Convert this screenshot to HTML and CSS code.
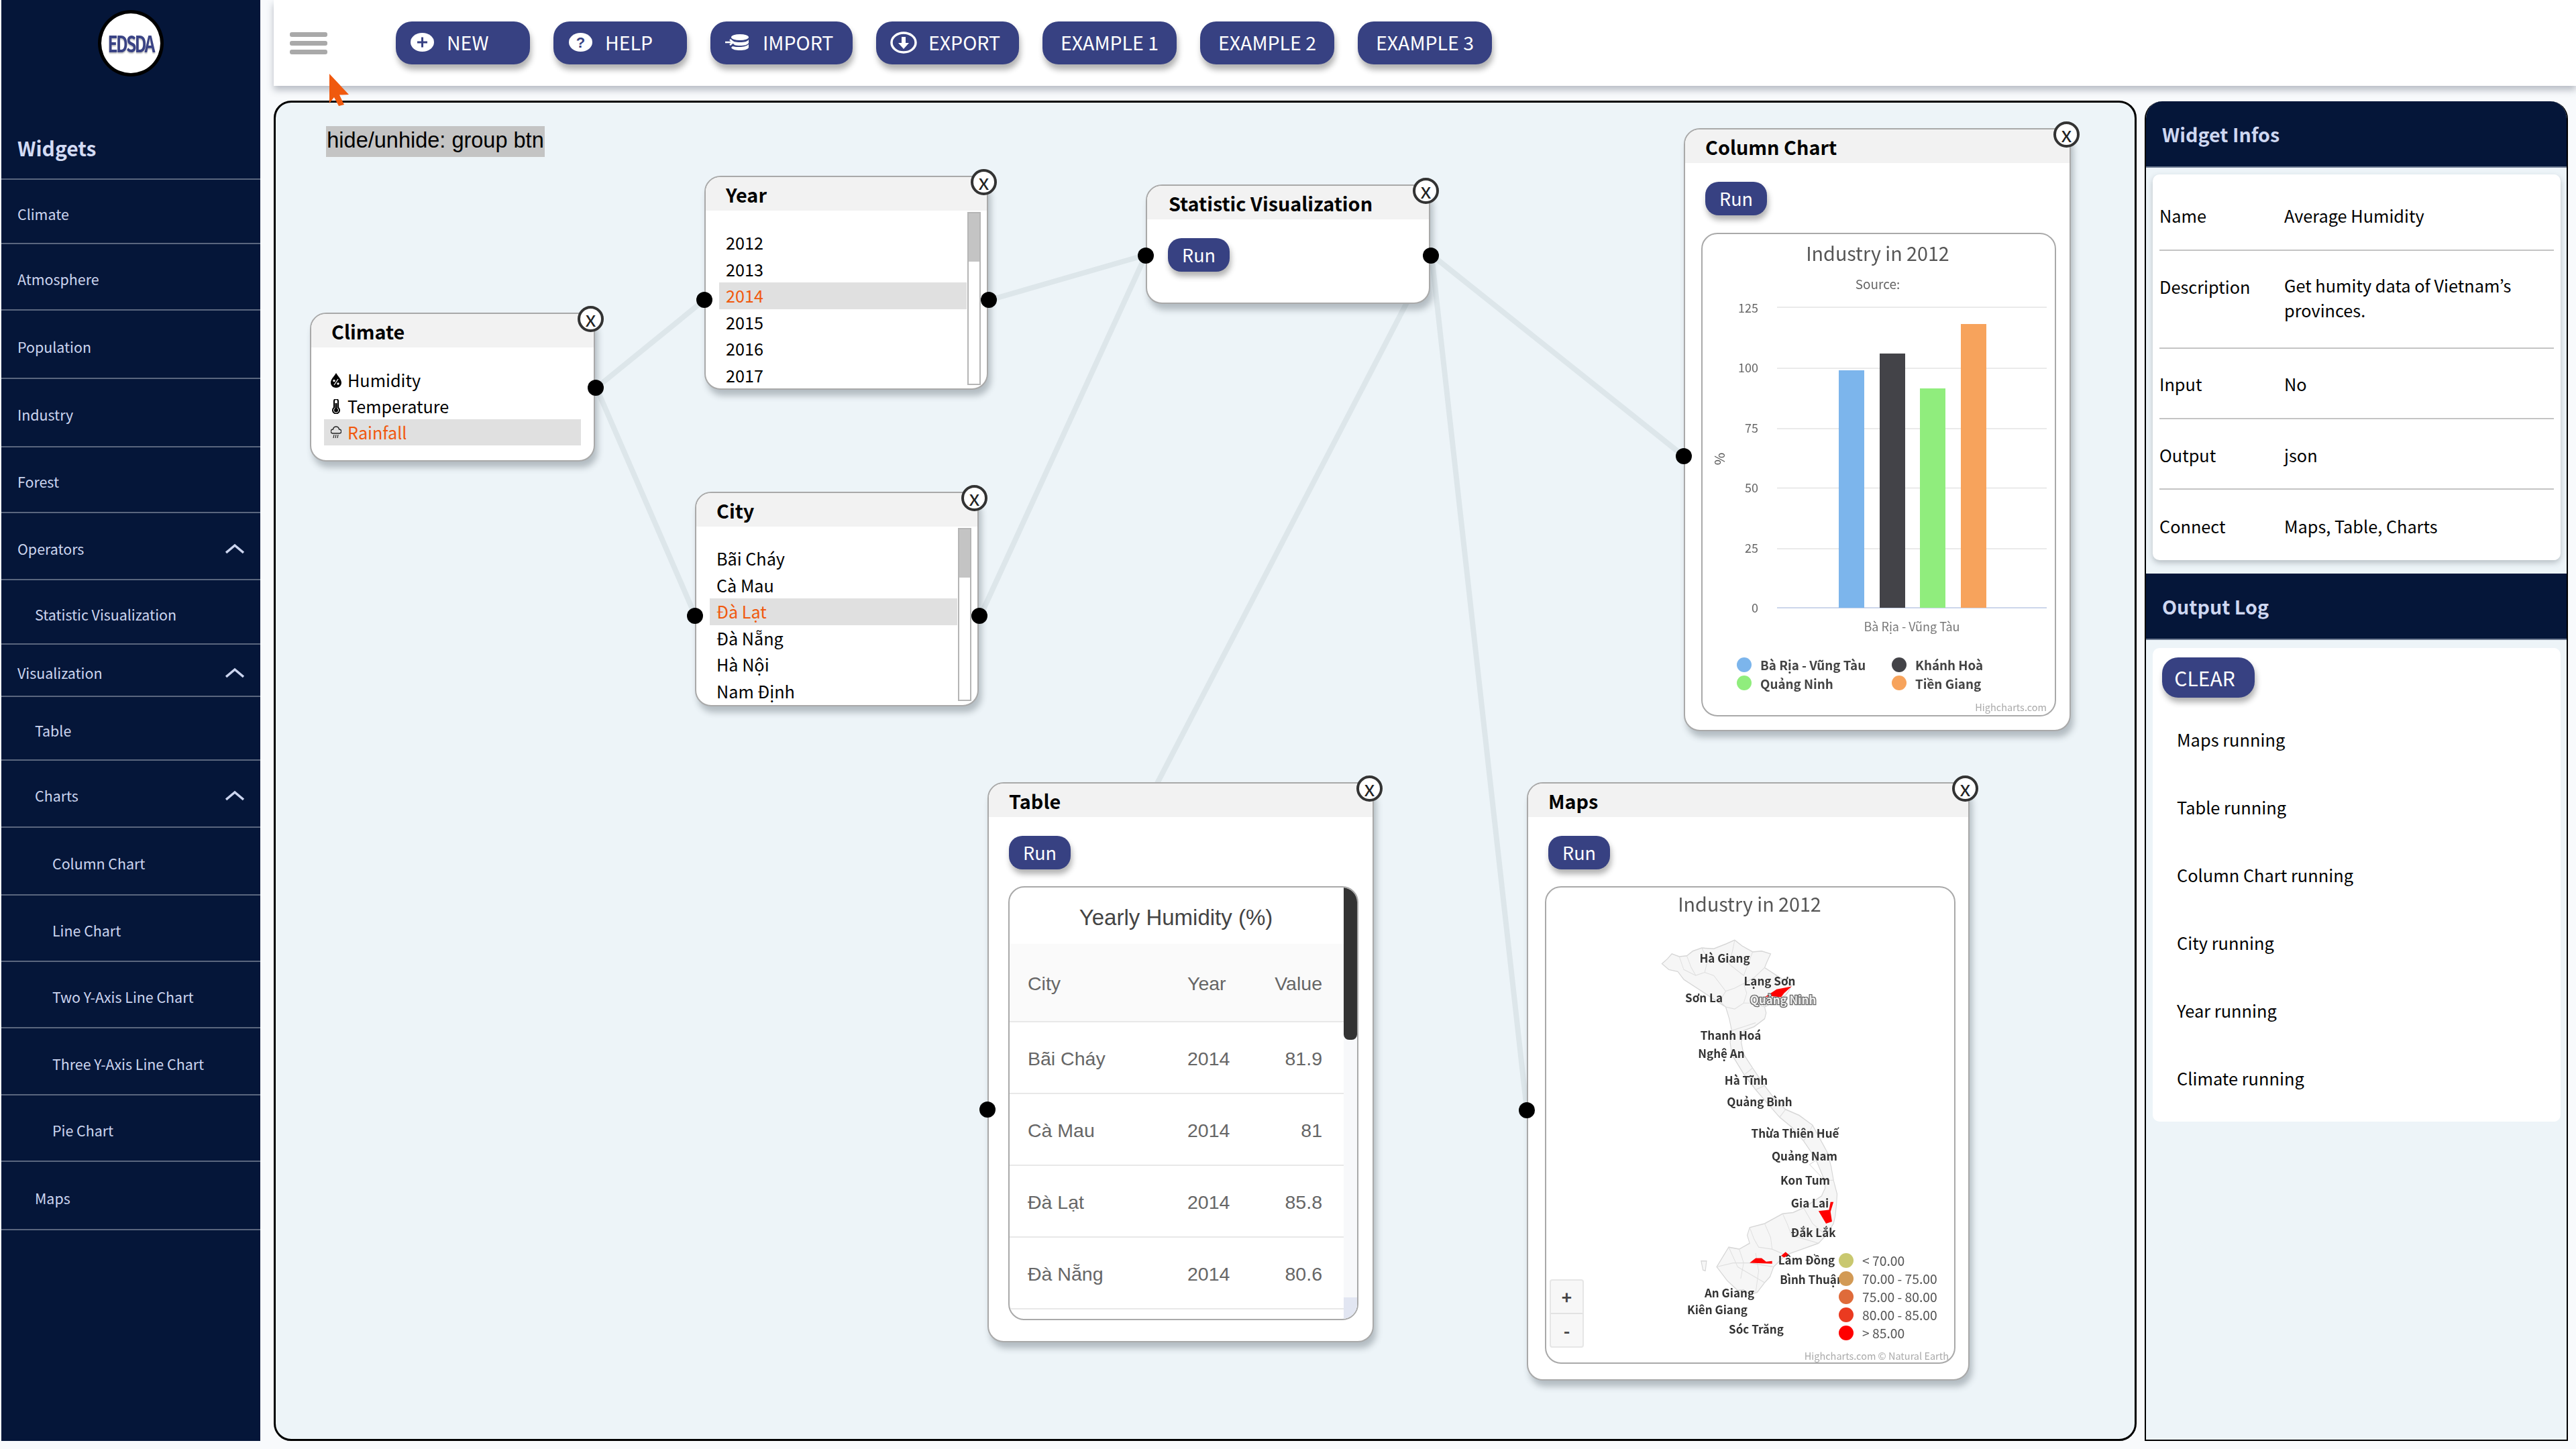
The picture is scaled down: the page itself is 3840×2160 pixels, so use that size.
FILE: index.html
```html
<!DOCTYPE html>
<html lang="en">
<head>
<meta charset="utf-8">
<title>EDSDA</title>
<link rel="stylesheet" href="styles.css">
</head>
<body>
<div class="app">
  <aside class="sidebar">
    <div class="logo-wrap"><div class="logo"><span class="logo-text">EDSDA</span></div></div>
    <div class="side-title">Widgets</div>
    <nav class="side-nav">
      <div class="nav-row">Climate</div>
      <div class="nav-row">Atmosphere</div>
      <div class="nav-row">Population</div>
      <div class="nav-row">Industry</div>
      <div class="nav-row">Forest</div>
      <div class="nav-row">Operators<svg class="chev" viewBox="0 0 28 16"><path d="M1 14 L14 3 L27 14"/></svg></div>
      <div class="nav-row sub">Statistic Visualization</div>
      <div class="nav-row">Visualization<svg class="chev" viewBox="0 0 28 16"><path d="M1 14 L14 3 L27 14"/></svg></div>
      <div class="nav-row sub">Table</div>
      <div class="nav-row sub">Charts<svg class="chev" viewBox="0 0 28 16"><path d="M1 14 L14 3 L27 14"/></svg></div>
      <div class="nav-row subsub">Column Chart</div>
      <div class="nav-row subsub">Line Chart</div>
      <div class="nav-row subsub">Two Y-Axis Line Chart</div>
      <div class="nav-row subsub">Three Y-Axis Line Chart</div>
      <div class="nav-row subsub">Pie Chart</div>
      <div class="nav-row sub">Maps</div>
    </nav>
  </aside>

  <main class="main">
    <header class="topbar">
      <div class="burger"><i></i><i></i><i></i></div>
      <div class="btn-group">
        <button class="tbtn b-new"><svg class="ic-oval" viewBox="0 0 35 28"><ellipse cx="17.5" cy="14" rx="17.5" ry="14" fill="#fff"/><path d="M17.5 6.5v15M10 14h15" stroke="#374182" stroke-width="3" fill="none"/></svg>NEW</button>
        <button class="tbtn b-help"><svg class="ic-oval" viewBox="0 0 35 28"><ellipse cx="17.5" cy="14" rx="17.5" ry="14" fill="#fff"/><text x="17.5" y="21.5" text-anchor="middle" class="q-mark">?</text></svg>HELP</button>
        <button class="tbtn b-import"><svg class="ic-db" viewBox="0 0 36 24"><ellipse cx="22" cy="4.5" rx="13" ry="4.5" fill="#fff"/><path d="M9 8c2 3 6 4 13 4s11-1 13-4v5c-2 3-6 4-13 4-3 0-6-.3-8-1l-3-3H9z" fill="#fff"/><path d="M11 18c3 1 7 1 11 1s10-1 13-4v5c-2 3-7 4-13 4s-11-1-13-4z" fill="#fff"/><path d="M0 12h11M7 8l5 4-5 4" stroke="#fff" stroke-width="2.4" fill="none"/></svg>IMPORT</button>
        <button class="tbtn b-export"><svg class="ic-exp" viewBox="0 0 40 33"><ellipse cx="20" cy="16.5" rx="18" ry="14.5" fill="none" stroke="#fff" stroke-width="3.5"/><path d="M17 8h6v9h5l-8 9-8-9h5z" fill="#fff"/></svg>EXPORT</button>
        <button class="tbtn b-ex">EXAMPLE 1</button>
        <button class="tbtn b-ex">EXAMPLE 2</button>
        <button class="tbtn b-ex">EXAMPLE 3</button>
      </div>
    </header>

    <div class="workspace">
      <section class="canvas">
        <svg class="links" viewBox="411 153 2771 1992">
          <line x1="889" y1="578" x2="1050" y2="447"/>
          <line x1="889" y1="578" x2="1036" y2="917"/>
          <line x1="1476" y1="447" x2="1708" y2="380"/>
          <line x1="1462" y1="917" x2="1708" y2="380"/>
          <line x1="2134" y1="380" x2="2510" y2="680"/>
          <line x1="2134" y1="380" x2="2276" y2="1655"/>
          <line x1="2134" y1="380" x2="1472" y2="1655"/>
        </svg>

        <div class="hint">hide/unhide: group btn</div>

        <article class="widget w-climate">
          <h3 class="w-head">Climate</h3>
          <span class="close">x</span><span class="dot out"></span>
          <ul class="climate-list">
            <li><svg class="wi" viewBox="0 0 16 22"><path d="M8 0C6 4 0 9 0 14.5 0 19 3.5 22 8 22s8-3 8-7.5C16 9 10 4 8 0z"/><path d="M5 18l6-9" stroke="#fff" stroke-width="1.300"/><circle cx="5" cy="11.500" r="1.700" fill="#fff"/><circle cx="11" cy="16" r="1.700" fill="#fff"/></svg>Humidity</li>
            <li><svg class="wi" viewBox="0 0 16 22"><path d="M5 3a3 3 0 0 1 6 0v9.500a5 5 0 1 1-6 0z" fill="#fff" stroke="#000" stroke-width="2"/><path d="M8 6v9" stroke="#000" stroke-width="3"/><circle cx="8" cy="16.500" r="3"/></svg>Temperature</li>
            <li class="sel"><svg class="wi" viewBox="0 0 16 22"><path d="M3 12a3 3 0 0 1 .5-6C4 3 6 2 8 2s4 1 4.500 4a3 3 0 0 1 .5 6z" fill="none" stroke="#222" stroke-width="1.400"/><path d="M5 14l-1 5M8 14l-1 5M11 14l-1 5" stroke="#222" stroke-width="1.200"/></svg>Rainfall</li>
          </ul>
        </article>

        <article class="widget w-year">
          <h3 class="w-head">Year</h3>
          <span class="close">x</span><span class="dot in"></span><span class="dot out"></span>
          <div class="list-wrap">
            <ul class="opt-list">
              <li>2012</li><li>2013</li><li class="sel">2014</li><li>2015</li><li>2016</li><li>2017</li>
            </ul>
            <div class="scroll"><i></i></div>
          </div>
        </article>

        <article class="widget w-city">
          <h3 class="w-head">City</h3>
          <span class="close">x</span><span class="dot in"></span><span class="dot out"></span>
          <div class="list-wrap">
            <ul class="opt-list">
              <li>Bãi Cháy</li><li>Cà Mau</li><li class="sel">Đà Lạt</li><li>Đà Nẵng</li><li>Hà Nội</li><li>Nam Định</li>
            </ul>
            <div class="scroll"><i></i></div>
          </div>
        </article>

        <article class="widget w-stat">
          <h3 class="w-head">Statistic Visualization</h3>
          <span class="close">x</span><span class="dot in"></span><span class="dot out"></span>
          <button class="run">Run</button>
        </article>

        <article class="widget w-column">
          <h3 class="w-head">Column Chart</h3>
          <span class="close">x</span><span class="dot in"></span>
          <button class="run">Run</button>
          <div class="chart-box">
            <svg class="chart" viewBox="2538 349 525 717">
              <text x="2799" y="389" class="c-title">Industry in 2012</text>
              <text x="2799" y="431" class="c-sub">Source:</text>
              <g class="grid">
                <line x1="2649" x2="3051" y1="458" y2="458"/><line x1="2649" x2="3051" y1="549" y2="549"/>
                <line x1="2649" x2="3051" y1="639" y2="639"/><line x1="2649" x2="3051" y1="727.500" y2="727.500"/>
                <line x1="2649" x2="3051" y1="818" y2="818"/>
              </g>
              <line x1="2649" x2="3051" y1="906" y2="906" class="axis"/>
              <g class="ylab">
                <text x="2621" y="466">125</text><text x="2621" y="555">100</text><text x="2621" y="645">75</text>
                <text x="2621" y="734">50</text><text x="2621" y="824">25</text><text x="2621" y="913">0</text>
              </g>
              <text x="0" y="0" class="ytitle" transform="translate(2571 684) rotate(-90)">%</text>
              <rect x="2741" y="552" width="38" height="354" fill="#7cb5ec"/>
              <rect x="2802" y="527" width="38" height="379" fill="#434348"/>
              <rect x="2862" y="579" width="38" height="327" fill="#90ed7d"/>
              <rect x="2923" y="483" width="38" height="423" fill="#f7a35c"/>
              <text x="2850" y="941" class="xlab">Bà Rịa - Vũng Tàu</text>
              <circle cx="2600" cy="991" r="11" fill="#7cb5ec"/><circle cx="2600" cy="1018" r="11" fill="#90ed7d"/>
              <circle cx="2831" cy="991" r="11" fill="#434348"/><circle cx="2831" cy="1018" r="11" fill="#f7a35c"/>
              <g class="leg">
                <text x="2624" y="999">Bà Rịa - Vũng Tàu</text><text x="2624" y="1027">Quảng Ninh</text>
                <text x="2855" y="999">Khánh Hoà</text><text x="2855" y="1027">Tiền Giang</text>
              </g>
              <text x="3051" y="1060" class="credit">Highcharts.com</text>
            </svg>
          </div>
        </article>

        <article class="widget w-table">
          <h3 class="w-head">Table</h3>
          <span class="close">x</span><span class="dot in"></span>
          <button class="run">Run</button>
          <div class="table-box">
            <div class="table-scroll">
              <div class="t-title">Yearly Humidity (%)</div>
              <table class="data">
                <thead><tr><th>City</th><th>Year</th><th class="num">Value</th></tr></thead>
                <tbody>
                  <tr><td>Bãi Cháy</td><td>2014</td><td class="num">81.9</td></tr>
                  <tr><td>Cà Mau</td><td>2014</td><td class="num">81</td></tr>
                  <tr><td>Đà Lạt</td><td>2014</td><td class="num">85.8</td></tr>
                  <tr><td>Đà Nẵng</td><td>2014</td><td class="num">80.6</td></tr>
                </tbody>
              </table>
            </div>
            <div class="t-bar"><i class="t-thumb"></i><i class="t-end"></i></div>
          </div>
        </article>

        <article class="widget w-maps">
          <h3 class="w-head">Maps</h3>
          <span class="close">x</span><span class="dot in"></span>
          <button class="run">Run</button>
          <div class="map-box">
            <svg class="chart" viewBox="2305 1324 608 708">
              <text x="2608" y="1360" class="c-title">Industry in 2012</text>
              <g transform="translate(2260 1150) scale(.4464 .5869)">
                <polygon class="land" points="487,490 505,478 520,465 545,472 570,470 590,458 620,450 660,452 700,440 730,430 755,445 790,460 820,458 850,465 838,485 830,500 870,520 920,545 910,560 900,570 865,585 830,600 835,615 830,630 795,650 760,660 752,690 760,720 790,755 830,800 865,835 900,860 945,875 990,900 1015,935 1040,970 1052,1005 1060,1040 1072,1075 1070,1100 1066,1130 1060,1150 1035,1180 1010,1200 955,1215 900,1230 880,1245 860,1260 848,1285 830,1300 805,1325 780,1330 760,1318 740,1320 705,1295 670,1260 690,1235 710,1210 745,1215 780,1200 772,1180 780,1160 830,1150 890,1125 925,1122 960,1110 990,1095 1020,1080 1032,1060 1030,1040 1000,985 960,940 920,905 880,880 840,845 800,810 760,770 720,720 715,690 720,660 712,630 700,600 660,580 620,560 590,545 560,530 548,518 540,510 510,505"/>
                <polygon class="land" points="618,1245 636,1245 632,1270 624,1268"/>
                <g class="prov">
                  <polyline points="570,470 585,500 600,520 630,512 660,520 680,540 700,560 730,552 760,540 795,525 830,500"/>
                  <polyline points="730,430 722,460 710,490 735,505 760,520 775,490 790,460"/>
                  <polyline points="620,450 640,480 630,512"/>
                  <polyline points="545,472 560,505 600,520"/>
                  <polyline points="700,560 680,585 700,600"/>
                  <polyline points="700,600 730,605 760,590 795,590 830,600"/>
                  <polyline points="760,540 770,565 760,590"/>
                  <polyline points="720,660 760,650 800,640"/>
                  <polyline points="760,720 740,725 720,720"/>
                  <polyline points="790,755 765,770"/>
                  <polyline points="830,800 800,810"/>
                  <polyline points="900,860 880,880"/>
                  <polyline points="990,900 975,925 960,940"/>
                  <polyline points="1040,970 1010,985 980,1000 1005,1020 1030,1040"/>
                  <polyline points="1060,1040 1030,1040"/>
                  <polyline points="890,1125 905,1150 920,1180 965,1190 1010,1200"/>
                  <polyline points="960,1110 990,1150 1035,1180"/>
                  <polyline points="780,1160 795,1190 810,1210 855,1215 900,1230"/>
                  <polyline points="830,1150 850,1185 855,1215"/>
                  <polyline points="710,1210 725,1235 740,1260 785,1280 830,1300"/>
                  <polyline points="670,1260 725,1250 780,1250 820,1255 860,1260"/>
                  <polyline points="745,1215 760,1250 750,1290"/>
                  <polyline points="800,1225 810,1270 800,1325"/>
                </g>
                <polygon class="red" points="830,575 870,555 920,548 895,565 885,575 850,572"/>
                <polygon class="red" points="1010,1118 1045,1115 1050,1095 1060,1095 1050,1120 1055,1145 1035,1150"/>
                <polygon class="red" points="780,1250 800,1238 820,1238 835,1247 855,1245 855,1252"/>
                <polygon class="red" points="885,1232 900,1222 912,1230 895,1236"/>
              </g>
              <g class="mlab">
                <text x="2571" y="1436">Hà Giang</text><text x="2638" y="1470">Lạng Sơn</text>
                <text x="2540" y="1495">Sơn La</text><text x="2658" y="1498" class="halo">Quảng Ninh</text>
                <text x="2580" y="1551">Thanh Hoá</text><text x="2566" y="1578">Nghệ An</text>
                <text x="2603" y="1618">Hà Tĩnh</text><text x="2623" y="1650">Quảng Bình</text>
                <text x="2676" y="1697">Thừa Thiên Huế</text><text x="2690" y="1731">Quảng Nam</text>
                <text x="2691" y="1767">Kon Tum</text><text x="2698" y="1801">Gia Lai</text>
                <text x="2703" y="1845">Đắk Lắk</text><text x="2693" y="1886">Lâm Đồng</text>
                <text x="2701" y="1915">Bình Thuận</text><text x="2578" y="1935">An Giang</text>
                <text x="2560" y="1960">Kiên Giang</text><text x="2618" y="1989">Sóc Trăng</text>
              </g>
              <circle cx="2752" cy="1880" r="11" fill="#c9c86f"/><circle cx="2752" cy="1907" r="11" fill="#d29a55"/>
              <circle cx="2752" cy="1934" r="11" fill="#df6b3a"/><circle cx="2752" cy="1961" r="11" fill="#ea3a20"/>
              <circle cx="2752" cy="1988" r="11" fill="#ff0000"/>
              <g class="mleg">
                <text x="2776" y="1888">&lt; 70.00</text><text x="2776" y="1915">70.00 - 75.00</text>
                <text x="2776" y="1942">75.00 - 80.00</text><text x="2776" y="1969">80.00 - 85.00</text>
                <text x="2776" y="1996">&gt; 85.00</text>
              </g>
              <text x="2905" y="2028" class="credit">Highcharts.com © Natural Earth</text>
            </svg>
            <div class="zoom-ctl"><span>+</span><span>-</span></div>
          </div>
        </article>
      </section>

      <aside class="panel">
        <h2 class="p-head">Widget Infos</h2>
        <div class="info-card">
          <div class="info-row r1"><span class="k">Name</span><span class="v">Average Humidity</span></div>
          <div class="info-row r2"><span class="k">Description</span><span class="v">Get humity data of Vietnam’s provinces.</span></div>
          <div class="info-row"><span class="k">Input</span><span class="v">No</span></div>
          <div class="info-row"><span class="k">Output</span><span class="v">json</span></div>
          <div class="info-row"><span class="k">Connect</span><span class="v">Maps, Table, Charts</span></div>
        </div>
        <h2 class="p-head log-head">Output Log</h2>
        <div class="log-card">
          <button class="clear">CLEAR</button>
          <ul class="log">
            <li>Maps running</li><li>Table running</li><li>Column Chart running</li>
            <li>City running</li><li>Year running</li><li>Climate running</li>
          </ul>
        </div>
      </aside>
    </div>
  </main>
</div>
<svg class="cursor" viewBox="0 0 30 48"><polygon points="1,0 30,31 16,31.500 23,46 15,48 8,35 1,44"/></svg>
</body>
</html>
```

FILE: styles.css
```css
* { box-sizing: border-box; }
html, body { margin: 0; padding: 0; }
body {
  width: 3840px;
  height: 2160px;
  overflow: hidden;
  position: relative;
  background: #f8fafc;
  font-family: "Noto Sans CJK JP", "Noto Sans", sans-serif;
  color: #000;
}
ul { list-style: none; margin: 0; padding: 0; }
h2, h3 { margin: 0; }
button { font-family: inherit; border: 0; cursor: pointer; }

.app { display: flex; height: 2148px; }

/* Sidebar */
.sidebar {
  flex: 0 0 388px;
  background: #051639;
  border-left: 2px solid #f2f5f8;
  color: #ccd5ef;
}
.logo-wrap { height: 174px; padding-top: 15px; display: flex; justify-content: center; }
.logo {
  width: 98px;
  height: 99px;
  border-radius: 50%;
  border: 5px solid #000;
  background: #fff;
  display: flex;
  align-items: center;
  justify-content: center;
}
.logo-text {
  font-size: 33px;
  line-height: 1;
  font-weight: 700;
  color: #3a4385;
  letter-spacing: -3.5px;
  transform: scaleX(.75);
  text-shadow: 0 2px 2px rgba(0,0,0,.25);
}
.side-title {
  height: 94px;
  padding: 0 0 0 24px;
  display: flex;
  align-items: center;
  font-size: 30px;
  font-weight: 700;
  color: #d3dbf4;
  border-bottom: 2px solid #5a667e;
}
.side-nav {
  display: grid;
  grid-template-rows: 96px 99px 102px 101.5px 98.5px 100px 96px 78px 95px 99.5px 101.5px 99px 99px 100px 99px 102px;
}
.nav-row {
  display: flex;
  align-items: center;
  justify-content: space-between;
  padding: 7px 24px 0 24px;
  font-size: 21.4px;
  line-height: 30px;
  border-bottom: 2px solid #5a667e;
}
.nav-row.sub { padding-left: 50px; }
.nav-row.subsub { padding-left: 76px; }
.chev { width: 28px; height: 16px; fill: none; stroke: #ccd5ef; stroke-width: 3.5; }

/* Main */
.main { flex: 1; display: flex; flex-direction: column; min-width: 0; }
.topbar {
  height: 128px;
  margin-left: 20px;
  background: #fff;
  display: flex;
  align-items: flex-start;
  box-shadow: 0 6px 10px rgba(60,70,90,.35);
  position: relative;
  z-index: 2;
}
.burger { width: 56px; margin: 48px 0 0 24px; display: flex; flex-direction: column; gap: 6px; }
.burger i { height: 7px; border-radius: 3px; background: #a9a9a9; }
.btn-group { display: flex; gap: 35px; margin: 32px 0 0 102px; }
.tbtn {
  height: 64px;
  border-radius: 24px;
  background: #374182;
  color: #fff;
  font-size: 28.5px;
  line-height: 1;
  display: flex;
  align-items: center;
  padding: 0 0 2px;
  box-shadow: 2px 8px 8px rgba(0,0,0,.3);
}
.ic-oval { width: 35px; height: 28px; margin-right: 19px; }
.q-mark { font-family: "Liberation Sans", sans-serif; font-size: 22px; font-weight: 700; fill: #374182; }
.b-new { width: 200px; padding-left: 22px; }
.b-help { width: 199px; padding-left: 23px; }
.b-import { width: 212px; padding-left: 22px; }
.ic-db { width: 36px; height: 24px; margin-right: 20px; }
.b-export { width: 213px; padding-left: 21px; }
.ic-exp { width: 40px; height: 33px; margin-right: 17px; }
.b-ex { width: 200px; justify-content: center; }

.workspace { flex: 1; display: flex; gap: 12px; padding: 22px 12px 0 20px; min-height: 0; }

/* Canvas */
.canvas {
  width: 2777px;
  height: 1998px;
  flex: none;
  position: relative;
  background: #edf4f8;
  border: 3px solid #000;
  border-radius: 26px;
}
.links { position: absolute; left: 0; top: 0; width: 2771px; height: 1992px; }
.links line { stroke: #dde6ea; stroke-width: 8; }
.hint {
  position: absolute;
  left: 75px;
  top: 35px;
  height: 46px;
  width: 326px;
  background: #c4c4c4;
  font-family: "Liberation Sans", Arial, sans-serif;
  font-size: 32.5px;
  line-height: 43px;
  text-align: center;
  white-space: nowrap;
}

.widget {
  position: absolute;
  background: #fff;
  border: 2px solid #a9a9a9;
  border-radius: 24px;
  box-shadow: 4px 9px 10px rgba(60,70,80,.32);
}
.w-head {
  height: 50px;
  padding-left: 30px;
  background: #f2f2f2;
  border-radius: 22px 22px 0 0;
  font-size: 28.8px;
  line-height: 51px;
  font-weight: 700;
}
.close {
  position: absolute;
  right: -15px;
  top: -12px;
  width: 39px;
  height: 39px;
  border-radius: 50%;
  border: 4px solid #333;
  background: #fff;
  color: #222;
  display: flex;
  align-items: center;
  justify-content: center;
  font-size: 32px;
  line-height: 26px;
  padding-bottom: 5px;
}
.dot { position: absolute; width: 24px; height: 24px; border-radius: 50%; background: #000; z-index: 1; }
.dot.in { left: -14px; }
.dot.out { right: -15px; }

.w-climate { left: 51px; top: 313px; width: 425px; height: 222px; }
.w-climate .dot { top: 98px; }
.w-year { left: 639px; top: 109px; width: 423px; height: 319px; }
.w-year .dot { top: 171px; }
.w-city { left: 625px; top: 580px; width: 423px; height: 320px; }
.w-city .dot { top: 171px; }
.w-stat { left: 1297px; top: 122px; width: 424px; height: 178px; }
.w-stat .dot { top: 92px; }
.w-stat .w-head { padding-left: 32px; }
.w-stat .run { margin-left: 31px; }
.w-column { left: 2099px; top: 38px; width: 577px; height: 899px; }
.w-column .dot { top: 475px; }
.w-table { left: 1061px; top: 1013px; width: 576px; height: 835px; }
.w-table .dot { top: 474px; }
.w-maps { left: 1865px; top: 1013px; width: 660px; height: 892px; }
.w-maps .dot { top: 475px; }

.climate-list { margin: 29px 19px 0 19px; }
.climate-list li {
  height: 39px;
  padding-left: 10px;
  display: flex;
  align-items: center;
  font-size: 25.2px;
  line-height: 39px;
}
.wi { width: 16px; height: 22px; margin-right: 9px; flex: none; }
.sel { background: #e0e0e0; color: #f0590e; }

.list-wrap { display: flex; align-items: flex-start; }
.opt-list { width: 369px; margin: 28px 0 0 20px; }
.opt-list li { height: 39.5px; padding-left: 10px; font-size: 25.2px; line-height: 38.5px; white-space: nowrap; }
.scroll { width: 20px; height: 258px; margin: 2px 0 0 1px; border: 2px solid #b5b5b5; background: #fff; }
.scroll i { display: block; height: 72px; background: #c4c4c4; }

.run {
  display: block;
  width: 92px;
  height: 50px;
  margin: 28px 0 0 30px;
  border-radius: 20px;
  background: #374182;
  color: #fff;
  font-size: 27px;
  line-height: 50px;
  padding: 0;
  box-shadow: 2px 7px 8px rgba(0,0,0,.3);
}

.chart-box, .map-box, .table-box {
  position: relative;
  background: #fff;
  border: 2px solid #a9a9a9;
  border-radius: 24px;
  overflow: hidden;
}
.chart-box { width: 529px; height: 721px; margin: 26px 0 0 24px; }
.map-box { width: 612px; height: 712px; margin: 25px 0 0 25px; }
.table-box { width: 522px; height: 647px; margin: 25px 0 0 29px; display: flex; }
.chart { display: block; width: 100%; height: 100%; filter: blur(.5px); }
.chart text { font-family: "Noto Sans CJK JP", "Noto Sans", sans-serif; }
.c-title { font-size: 28.7px; fill: #555; text-anchor: middle; }
.c-sub { font-size: 19px; fill: #666; text-anchor: middle; }
.grid line { stroke: #eaeaea; stroke-width: 2; }
.axis { stroke: #ccd6eb; stroke-width: 2; }
.ylab text { font-size: 18px; fill: #666; text-anchor: end; }
.ytitle { font-size: 20px; fill: #555; text-anchor: middle; }
.xlab { font-size: 18px; fill: #777; text-anchor: middle; }
.leg text { font-size: 18.8px; font-weight: 700; fill: #444; }
.credit { font-size: 14.5px; fill: #aaa; text-anchor: end; }
.land { fill: #f6f6f6; stroke: #d6d6d6; stroke-width: 2.5; }
.prov { fill: none; stroke: #dedede; stroke-width: 2; }
.red { fill: #f00; }
.mlab text { font-size: 17px; font-weight: 700; fill: #333; text-anchor: middle; }
.mlab .halo { fill: #eee; stroke: #666; stroke-width: 2.5px; paint-order: stroke; }
.mleg text { font-size: 19.3px; fill: #555; }
.zoom-ctl {
  position: absolute;
  left: 5px;
  top: 584px;
  width: 51px;
  height: 102px;
  background: #f7f7f7;
  border: 2px solid #e6e6e6;
  border-radius: 4px;
  display: grid;
  grid-template-rows: 1fr 1fr;
  font-size: 26px;
  font-weight: 700;
  color: #444;
  text-align: center;
  line-height: 48px;
}
.zoom-ctl span + span { border-top: 2px solid #e2e2e2; }

.table-scroll { flex: 1; min-width: 0; overflow: hidden; }
.t-title {
  height: 84px;
  padding-right: 2px;
  text-align: center;
  font-family: "Liberation Sans", Arial, sans-serif;
  font-size: 33px;
  line-height: 90px;
  color: #444;
}
.data {
  width: 100%;
  table-layout: fixed;
  border-collapse: collapse;
  font-family: "Liberation Sans", Arial, sans-serif;
  font-size: 28.5px;
  color: #666;
}
.data th, .data td { padding: 4px 0 0 27px; text-align: left; font-weight: 400; border-bottom: 2px solid #e8e8e8; }
.data th { height: 116px; background: #fafafa; }
.data td { height: 107px; }
.data th:nth-child(1), .data td:nth-child(1) { width: 265px; }
.data th:nth-child(2), .data td:nth-child(2) { padding-left: 0; width: 120px; }
.data .num { text-align: right; padding: 4px 32px 0 0; }
.t-bar { flex: 0 0 20px; background: #f7f8fa; display: flex; flex-direction: column; justify-content: space-between; }
.t-thumb { height: 227px; background: #333; border-radius: 0 0 8px 8px; }
.t-end { height: 32px; background: #e2e6f2; }

/* Right panel */
.panel {
  flex: 1;
  background: #edf4f8;
  border: solid #000;
  border-width: 0 2px 2px 2px;
  border-radius: 26px 26px 0 0;
  overflow: hidden;
  margin-top: 1px;
  height: 1997px;
}
.p-head {
  height: 99px;
  padding-left: 24px;
  background: #051639;
  color: #ced7f1;
  font-size: 28.7px;
  line-height: 98px;
  font-weight: 700;
  border-bottom: 2px solid #6d7a90;
}
.info-card {
  margin: 10px 9px 0 10px;
  height: 575px;
  padding: 0 10px;
  background: #fff;
  border-radius: 10px;
  box-shadow: 0 4px 8px rgba(60,70,80,.3);
  display: grid;
  grid-template-rows: 114px 145.5px 105.500px 105px 105px;
}
.info-row {
  display: flex;
  align-items: center;
  font-size: 25.3px;
  line-height: 37px;
  border-bottom: 2px solid #c4c4c4;
  padding-top: 3px;
}
.info-row:last-child { border-bottom: 0; }
.info-row.r1 { padding-top: 11px; }
.info-row.r2 { align-items: flex-start; padding-top: 33px; }
.r2 .k { padding-top: 2px; }
.k { flex: 0 0 186px; }
.v { flex: 1; }
.log-head { margin-top: 20px; }
.log-card {
  margin: 12px 9px 0 10px;
  height: 706px;
  background: #fff;
  border-radius: 10px;
  padding: 14px 0 0 14px;
}
.clear {
  display: block;
  width: 138px;
  height: 60px;
  border-radius: 24px;
  background: #374182;
  color: #fff;
  font-size: 30px;
  line-height: 60px;
  padding: 0 11px 0 0;
  box-shadow: 2px 7px 8px rgba(0,0,0,.3);
}
.log { margin: 12px 0 0 22px; }
.log li { height: 101px; line-height: 101px; font-size: 25.4px; }

.cursor { position: absolute; left: 490px; top: 110px; width: 30px; height: 48px; fill: #f0590e; z-index: 5; }
```
